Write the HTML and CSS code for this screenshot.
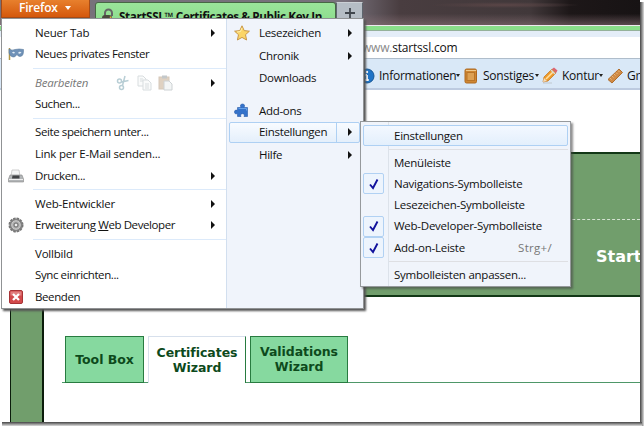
FILE: index.html
```html
<!DOCTYPE html>
<html lang="de">
<head>
<meta charset="utf-8">
<title>Firefox</title>
<link rel="stylesheet" href="styles.css">
</head>
<body>
<div class="window">
  <div class="titlebar">
    <div class="tab"><svg class="lock" width="15" height="16" viewBox="0 0 15 16"><path d="M4 8V5a3.4 3.4 0 0 1 7 0v3" fill="none" stroke="#666" stroke-width="2"/><rect x="1" y="7" width="10" height="8" rx="3" fill="#4b4a3e"/><path d="M9 8l5 5v3H8z" fill="#e8a936"/></svg><span>StartSSL™ Certificates &amp; Public Key In</span></div>
    <div class="newtab"><svg width="12" height="12" viewBox="0 0 12 12"><path d="M6 1v10M1 6h10" stroke="#40464d" stroke-width="1.8"/></svg></div>
  </div>
  <div class="strip"></div>
  <div class="nav"><span class="www">www.</span><span>startssl.com</span></div>
  <div class="toolbar">
    <div class="tool info"><svg width="14" height="16" viewBox="0 0 14 16"><circle cx="6" cy="8" r="7" fill="#1f74c7" stroke="#175896"/><path d="M6 7v5M4.5 7H6M4.3 12h3.4" stroke="#fff" stroke-width="1.8"/><circle cx="6" cy="4" r="1.2" fill="#fff"/></svg><span>Informationen</span><i></i></div>
    <div class="tool other"><svg width="14" height="16" viewBox="0 0 14 16"><rect x="1" y="1" width="11.5" height="14" rx="1.5" fill="#cf8732" stroke="#ae681f"/><rect x="3" y="4.500" width="7.500" height="8" fill="#dda052" stroke="#b97428"/><path d="M2 2.500h10" stroke="#efc98c"/></svg><span>Sonstiges</span><i></i></div>
    <div class="tool outline"><svg width="17" height="17" viewBox="0 0 17 17"><path d="M2 15l1-5 8-8 4 4-8 8z" fill="#ee9b2b" stroke="#bd711f" stroke-width=".7"/><path d="M5 12l7-7" stroke="#ffe0a1" stroke-width="1.600"/><path d="M2 15l1-4 3 3z" fill="#f3dcba"/><path d="M11 2l2-1.500 3.500 3L15 6z" fill="#dc6572"/><path d="M10 3l4 4" stroke="#d4d8dd" stroke-width="1.200"/><path d="M2 16h9" stroke="#aaa" opacity=".5"/></svg><span>Kontur</span><i></i></div>
    <div class="tool size"><svg width="16" height="16" viewBox="0 0 16 16"><path d="M1 11.500L12 1l3.500 3.500L5 15z" fill="#d08b45" stroke="#b06d2b"/><path d="M3 10l1.500 1.500M5 8l1.500 1.500M7 6l1.500 1.500M9 4.500l1.500 1.500M11 2.500L12.500 4" stroke="#f0c38b" stroke-width=".8"/></svg><span>Grö</span></div>
  </div>
  <main class="page">
    <div class="rail"></div>
    <div class="content">
      <header class="banner"><div class="bannertop"></div><div class="brand">Start</div></header>
      <div class="tabs">
        <div class="ptab box">Tool Box</div>
        <div class="ptab active">Certificates<br>Wizard</div>
        <div class="ptab valid">Validations<br>Wizard</div>
      </div>
    </div>
  </main>
</div>
<div class="edge-right"></div><div class="edge-bottom"></div>
<div class="firefox">Firefox<i></i></div>
<div class="menu">
  <div class="left">
    <div class="item"><span class="loose">Neuer Tab</span><i class="arrow"></i></div>
    <div class="item"><svg class="icon" width="16" height="16" viewBox="0 0 16 16"><path d="M1.500 2v12" stroke="#b39743" stroke-width="1.500"/><path d="M1 3q3 2 6 .5 4-1 8.500 0 .3 7-3.500 7-2 0-3-2-2 3-4 2.500-3-.5-4-4z" fill="#6f91b7" stroke="#57789c" stroke-width=".6"/><path d="M4 6.500q2-1.500 3 .5-1.500 1-3-.5M10 7q1.500-2 3.500-.5-1.500 2-3.500.5" fill="#e2edf6"/></svg><span>Neues privates Fenster</span></div>
    <hr>
    <div class="item"><span class="disabled">Bearbeiten</span>
      <div class="edit"><svg width="15" height="16" viewBox="0 0 15 16"><g fill="none" stroke="#b8ced5" stroke-width="1.500"><circle cx="3.500" cy="6" r="2"/><circle cx="5.500" cy="12.500" r="2"/><path d="M5.500 7l7-1.500M6.500 10.500L9 1"/></g></svg><svg width="15" height="16" viewBox="0 0 15 16"><g fill="#fafbfb" stroke="#d8dddf"><path d="M1 1h5l3 3v7H1z"/><path d="M6 5h5l3 3v7H6z"/><path d="M3 4h3M3 6h3M8 9h4M8 11h4M8 13h4"/></g></svg><svg width="15" height="16" viewBox="0 0 15 16"><rect x="1" y="2" width="10" height="12" fill="#dfd1c1" stroke="#d5c8b9"/><rect x="4" y="0.500" width="5" height="3" fill="#c3c8ca"/><path d="M6 6h5l3 3v6H6z" fill="#f3f5f5" stroke="#cdd2d4"/></svg></div><i class="arrow"></i></div>
    <div class="item"><span>Suchen...</span></div>
    <hr>
    <div class="item"><span>Seite speichern unter...</span></div>
    <div class="item"><span class="loose">Link per E-Mail senden...</span></div>
    <div class="item"><svg class="icon" width="16" height="16" viewBox="0 0 16 16"><path d="M4 2h7l1 6H3z" fill="#f4f5f5" stroke="#bbb" stroke-width=".7"/><path d="M2 7h12l1.500 4v3H.5v-3z" fill="#b2b5b7" stroke="#888" stroke-width=".6"/><path d="M4.500 7.500h7v3H4z" fill="#404244"/><path d="M1 11.500h14" stroke="#eee"/></svg><span>Drucken...</span><i class="arrow"></i></div>
    <hr>
    <div class="item"><span class="loose">Web-Entwickler</span><i class="arrow"></i></div>
    <div class="item"><svg class="icon" width="16" height="16" viewBox="0 0 16 16"><circle cx="8" cy="8" r="6.600" fill="#888" stroke="#777" stroke-width="1.800" stroke-dasharray="2.500 1"/><circle cx="8" cy="8" r="4.200" fill="#aaa" stroke="#d5d5d5"/><circle cx="8" cy="8" r="2" fill="#eee" stroke="#686868"/></svg><span>Erweiterung <u>W</u>eb Developer</span><i class="arrow"></i></div>
    <hr>
    <div class="item"><span class="loose">Vollbild</span></div>
    <div class="item"><span>Sync einrichten...</span></div>
    <div class="item"><svg class="icon" width="16" height="16" viewBox="0 0 16 16"><rect x="1.500" y="1.500" width="13" height="13" rx="1.500" fill="#d2494b" stroke="#a83336"/><path d="M2.500 2.500h11v4h-11z" fill="#e17f7f"/><path d="M5 5l6 6M11 5l-6 6" stroke="#fff" stroke-width="2.300"/></svg><span>Beenden</span></div>
  </div>
  <div class="right">
    <div class="item"><svg class="icon" width="16" height="16" viewBox="0 0 16 16"><path d="M8 .8l2.200 4.800 5.200.6-3.900 3.500 1.100 5.300L8 12.400 3.400 15l1.100-5.300L.6 6.200l5.200-.6z" fill="#fbd567" stroke="#c99849"/><path d="M8 3L6.500 6.500 3 7" stroke="#fff1af" fill="none"/></svg><span>Lesezeichen</span><i class="arrow"></i></div>
    <div class="item chronik"><span>Chronik</span><i class="arrow"></i></div>
    <div class="item"><span>Downloads</span></div>
    <div class="item addons"><svg class="icon" width="16" height="16" viewBox="0 0 16 16"><path d="M3.500 4.500H7C5.800 2.500 6.500 1 8.500 1s2.700 1.500 1.500 3.500h3.500v9H10c1-2-.2-2.800-1.500-2.800s-2.500.8-1.500 2.800H3.500V10.500C1.500 11.500.5 10.500.5 9s1-2.500 3-1.500z" fill="#3472ca" stroke="#285baa" stroke-width=".6"/><path d="M4.500 5.500h8v2" stroke="#65a1e9" fill="none"/></svg><span>Add-ons</span></div>
    <div class="item selected"><span>Einstellungen</span><b></b><i class="arrow"></i></div>
    <div class="item"><span>Hilfe</span><i class="arrow"></i></div>
  </div>
</div>
<div class="submenu">
  <div class="item top"><span>Einstellungen</span></div>
  <hr>
  <div class="item"><span>Menüleiste</span></div>
  <div class="item"><div class="check"><svg width="10" height="12" viewBox="0 0 10 12"><path d="M1 6.500L4 10 8.500 1.500" fill="none" stroke="#11119c" stroke-width="1.900"/></svg></div><span>Navigations-Symbolleiste</span></div>
  <div class="item"><span>Lesezeichen-Symbolleiste</span></div>
  <div class="item"><div class="check"><svg width="10" height="12" viewBox="0 0 10 12"><path d="M1 6.500L4 10 8.500 1.500" fill="none" stroke="#11119c" stroke-width="1.900"/></svg></div><span>Web-Developer-Symbolleiste</span></div>
  <div class="item"><div class="check"><svg width="10" height="12" viewBox="0 0 10 12"><path d="M1 6.500L4 10 8.500 1.500" fill="none" stroke="#11119c" stroke-width="1.900"/></svg></div><span>Add-on-Leiste</span><em>Strg+/</em></div>
  <hr>
  <div class="item"><span>Symbolleisten anpassen...</span></div>
</div>
</body>
</html>
```
FILE: styles.css
```css
* { box-sizing: border-box; }
body { margin: 0; width: 644px; height: 426px; position: relative; overflow: hidden; background: #fff; font: 11.5px/16px "Open Sans", "Noto Sans", sans-serif; letter-spacing: -.25px; color: #111; white-space: nowrap; }
svg { display: block; flex: none; }
.window { width: 640px; height: 422px; overflow: hidden; display: flex; flex-direction: column; }
.titlebar { height: 25px; flex: none; display: flex; padding: 2px 0 0 95px; background: radial-gradient(ellipse at 505px 5px, #5b4647 0, transparent 75px), linear-gradient(180deg, transparent 55%, #8b727890 100%), linear-gradient(90deg, #77717b 0 345px, #493d40 400px, #41383a 530px, #1d1718 570px, #171314); }
.tab { width: 241px; height: 23px; border: 1px solid #476744; border-radius: 3px 3px 0 0; background: linear-gradient(#9ae49a, #8bdc8b); display: flex; align-items: flex-start; gap: 3px; padding: 5px 0 0 5px; font: bold 11.7px/16px "Open Sans", sans-serif; letter-spacing: -.37px; overflow: hidden; }
.newtab { width: 27px; height: 23px; border: 1px solid #5e666e; border-top-color: #cbd0d5; background: #b5bdc5; display: flex; justify-content: center; padding-top: 4px; }
.strip { height: 6px; flex: none; background: #8ade8a; border-top: 1px solid #eee8ee; border-bottom: 1px solid #94b19a; }
.nav { height: 28px; flex: none; background: #fff; border-top: 6px solid #e4edf8; border-bottom: 1px solid #afbdcb; padding: 3px 0 0 362px; font-size: 12px; letter-spacing: -.2px; }
.nav .www { color: #888; }
.toolbar { height: 31px; flex: none; display: flex; align-items: center; padding: 4px 0 0 361px; background: #d9e8f7; border-bottom: 2px solid #bdcbe0; font-size: 12px; letter-spacing: -.25px; }
.tool { display: flex; align-items: center; flex: none; gap: 4px; }
.tool i { border: solid transparent; border-width: 3px 2px 0; border-top-color: #222; margin-left: -4px; }
.info { width: 103px; } .other { width: 77px; } .outline { width: 66px; }
.other { gap: 5px; }
.page { flex: 1; display: flex; padding: 62px 0 0 10px; background: #fff; }
.rail { width: 34px; flex: none; background: #719e6c; border: solid #0b1c0b; border-width: 2px 2px 0 1px; }
.content { flex: 1; min-width: 0; }
.banner { height: 145px; border: solid #123716; border-width: 2px 0; background: #719e6c; overflow: hidden; }
.bannertop { height: 66px; border-bottom: 1px dashed #d5e3d3; }
.brand { margin-left: 552px; padding-top: 26px; font: bold 16px/22px "DejaVu Sans", sans-serif; letter-spacing: 0; color: #fff; }
.tabs { display: flex; margin: 39px 0 0 18px; padding-left: 3px; height: 47px; border-bottom: 1px solid #4e9768; font: bold 12.5px/15px "DejaVu Sans", sans-serif; letter-spacing: -.05px; color: #0d4a1c; text-align: center; }
.ptab { height: 47px; display: flex; align-items: center; justify-content: center; flex: none; }
.box, .valid { background: #86d99f; border: 1px solid #287b40; }
.valid { padding-bottom: 2px; }
.box { width: 79px; margin-right: 4px; }
.active { width: 98px; background: #fff; border: solid #d7e0ec; border-width: 1px 1px 0; border-right-color: #287b40; margin-right: 4px; }
.valid { width: 98px; }
.edge-right { position: absolute; left: 640px; top: 2px; width: 4px; height: 424px; background: linear-gradient(90deg, #444, #777 35%, #ddd); }
.edge-bottom { position: absolute; left: 2px; top: 422px; width: 640px; height: 4px; background: linear-gradient(#444, #777 35%, #ddd); }
.firefox { position: absolute; left: 1px; top: 0; width: 89px; height: 18px; background: linear-gradient(#e8802d, #d4580c); border: 1px solid #a64b17; border-top: 0; display: flex; gap: 7px; align-items: center; padding: 0 0 1px 17px; color: #fff; font-size: 12px; font-weight: 600; letter-spacing: -.2px; }
.firefox i { border: solid transparent; border-width: 4px 3.5px 0; border-top-color: #fff; }
.menu { position: absolute; left: 1px; top: 18px; width: 363px; height: 291px; display: flex; border: 1px solid #909294; background: #fff; box-shadow: 2px 2px 2px #555; }
.left { width: 224px; padding-top: 3px; letter-spacing: -.4px; }
.loose { letter-spacing: -.2px; }
.right { flex: 1; background: #f0f4fb; border-left: 1px solid #d2dfef; padding-top: 3.500px; letter-spacing: -.3px; }
.item { height: 21.5px; display: flex; align-items: center; position: relative; }
hr { height: 1px; border: 0; margin: 2.800px 0; background: #dceafa; }
.left hr { margin-left: 31px; }
.left .item { height: 21.600px; padding-left: 33px; }
.right .item { padding-left: 32px; }
.icon { position: absolute; left: 6px; }
.right .icon { left: 7px; }
.arrow { position: absolute; right: 11px; border: solid transparent; border-width: 4px 0 4px 4px; border-left-color: #111; }
.disabled { color: #777; font-style: italic; letter-spacing: -.2px; }
.edit { display: flex; gap: 6px; position: absolute; left: 114px; }
.right .chronik { margin-top: 1.500px; }
.right .addons { margin-top: 11.500px; }
.right .selected { margin: 0 3px 1px 2px; padding-left: 29px; border: 1px solid #aed0f3; border-radius: 2px; background: linear-gradient(#f8fbff, #e4effb); }
.selected b { position: absolute; right: 22px; height: 19px; border-left: 1px solid #aed0f3; }
.selected .arrow { right: 7px; }
.submenu { position: absolute; left: 360px; top: 121px; width: 211px; height: 166px; padding: 3px 2px; border: 1px solid #96999c; background: linear-gradient(90deg, transparent 27px, #dce2ea 27px 28px, transparent 28px), #f0f4fb; box-shadow: 2px 2px 2px #4449; }
.submenu .item { height: 21.200px; padding-left: 31px; }
.submenu .top { padding-left: 30px; border: 1px solid #aed0f3; border-radius: 2px; background: linear-gradient(#f3f8ff, #e3effc); }
.submenu hr { margin: 2.500px 0 2.500px 26px; background: #dedfe3; }
.check { position: absolute; left: 0; width: 21px; height: 21px; border: 1px solid #b1d1f3; border-radius: 2px; background: #edf4fd; display: flex; align-items: center; justify-content: center; }
.submenu em { position: absolute; right: 16px; font-style: normal; color: #777; letter-spacing: .3px; }
```
